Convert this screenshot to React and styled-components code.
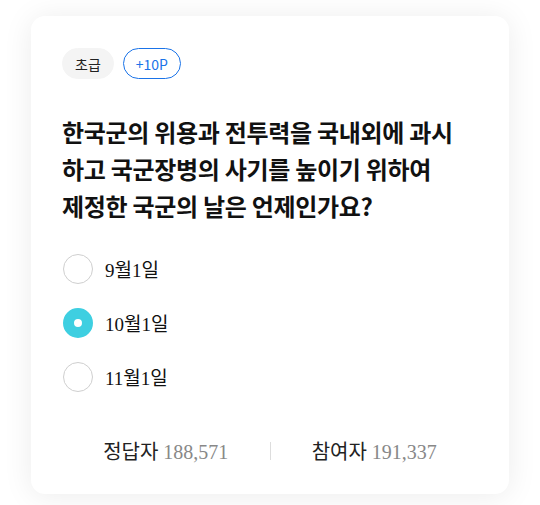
import { useState } from "react";
import styled, { createGlobalStyle } from "styled-components";

const GlobalStyle = createGlobalStyle`
  html, body {
    margin: 0;
    padding: 0;
    background: #ffffff;
  }
  body {
    font-family: "Noto Sans CJK KR", sans-serif;
  }
`;

const options = ["9월1일", "10월1일", "11월1일"];

export default function App() {
  const [picked, setPicked] = useState(1);

  return (
    <>
      <GlobalStyle />
      <Page>
        <Card>
          <Tags>
            <Tag>초급</Tag>
            <Tag $point>+10P</Tag>
          </Tags>

          <Question>
            한국군의 위용과 전투력을 국내외에 과시
            <br />
            하고 국군장병의 사기를 높이기 위하여
            <br />
            제정한 국군의 날은 언제인가요?
          </Question>

          <Options>
            {options.map((label, i) => (
              <Option key={label} onClick={() => setPicked(i)}>
                <Radio $checked={picked === i} />
                <span>{label}</span>
              </Option>
            ))}
          </Options>

          <Stats>
            <Stat>
              정답자 <em>188,571</em>
            </Stat>
            <Divider />
            <Stat>
              참여자 <em>191,337</em>
            </Stat>
          </Stats>
        </Card>
      </Page>
    </>
  );
}

const Page = styled.div`
  padding: 16px 31px 11px 31px;
`;

const Card = styled.div`
  background: #fff;
  border-radius: 14px;
  box-shadow: 0 2px 30px rgba(0, 0, 0, 0.08);
  padding: 32px 31px 26px 31px;
  height: 478px;
  box-sizing: border-box;
`;

const Tags = styled.div`
  display: flex;
  gap: 9px;
`;

const Tag = styled.span`
  display: inline-flex;
  align-items: center;
  justify-content: center;
  height: 31px;
  padding: 0 12px;
  border-radius: 16px;
  font-size: 14px;
  box-sizing: border-box;
  background: ${(p) => (p.$point ? "#fff" : "#f4f4f4")};
  color: ${(p) => (p.$point ? "#1a73e8" : "#222")};
  border: 1px solid ${(p) => (p.$point ? "#1a73e8" : "#f4f4f4")};
`;

const Question = styled.h2`
  margin: 34px 0 0 0;
  font-size: 24px;
  font-weight: 700;
  line-height: 37px;
  color: #111;
  letter-spacing: -0.3px;
`;

const Options = styled.ul`
  list-style: none;
  margin: 29px 0 0 0;
  padding: 0 0 0 1px;
  display: flex;
  flex-direction: column;
  gap: 23px;
`;

const Option = styled.li`
  display: flex;
  align-items: center;
  gap: 12px;
  height: 31px;
  cursor: pointer;
  font-family: "Liberation Serif", "Noto Sans CJK KR", serif;
  font-size: 19px;
  color: #111;
`;

const Radio = styled.span`
  width: 30px;
  height: 30px;
  border-radius: 50%;
  box-sizing: border-box;
  border: ${(p) => (p.$checked ? "11px solid #3ecfe1" : "1.5px solid #cfcfcf")};
  background: #fff;
`;

const Stats = styled.div`
  margin-top: 44px;
  display: flex;
  align-items: center;
`;

const Stat = styled.div`
  flex: 1;
  text-align: center;
  font-family: "Liberation Serif", "Noto Sans CJK KR", serif;
  font-size: 20px;
  color: #222;

  em {
    font-style: normal;
    color: #888;
  }
`;

const Divider = styled.span`
  width: 1px;
  height: 18px;
  background: #ddd;
`;
